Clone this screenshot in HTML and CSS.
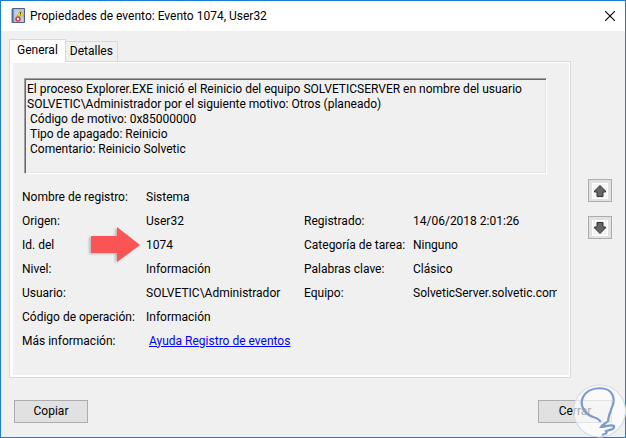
FILE: index.html
```html
<!DOCTYPE html>
<html lang="es">
<head>
<meta charset="utf-8">
<meta name="viewport" content="width=device-width, initial-scale=1">
<title>Propiedades de evento: Evento 1074, User32</title>
<link rel="stylesheet" href="styles.css">
</head>
<body>
<div class="dialog">
  <header class="titlebar">
    <svg class="app-icon" viewBox="0 0 16 16" width="16" height="16" aria-hidden="true">
      <path d="M2.500 .5h12v14h-12z" fill="#a9c0e0" stroke="#4a5f86"/>
      <path d="M5 3h8M5 5h8M5 7h8M5 9h8M5 11h8M5 13h8" stroke="#d5e3f4"/>
      <path d="M1 2h3M1 4h3M1 6h3M1 8h3M1 10h3M1 12h3M1 14h3" stroke="#66728a"/>
      <path d="M10.500 2 14 8H7z" fill="#ffdc2e" stroke="#c29a10" stroke-width=".6"/>
      <path d="M10.500 4v2M10.500 6.600v.8" stroke="#4b3c00"/>
      <circle cx="8" cy="11" r="2.800" fill="#d9483b"/>
      <path d="m7 10 2 2m0-2-2 2" stroke="#fff"/>
    </svg>
    <h1 class="title">Propiedades de evento: Evento 1074, User32</h1>
    <button class="close" type="button" aria-label="Cerrar ventana">
      <svg viewBox="0 0 10 10" width="10" height="10" aria-hidden="true"><path d="m0 0 10 10M10 0 0 10" stroke="#000" stroke-width="1.100"/></svg>
    </button>
  </header>

  <main class="content">
    <section class="tabs">
      <div class="tablist" role="tablist">
        <button class="tab tab-active" type="button" role="tab" aria-selected="true" aria-controls="general" id="tab-general">General</button>
        <button class="tab" type="button" role="tab" aria-selected="false">Detalles</button>
      </div>
      <div class="panel" role="tabpanel" id="general" aria-labelledby="tab-general">
        <div class="message">El proceso Explorer.EXE inició el Reinicio del equipo SOLVETICSERVER en nombre del usuario
SOLVETIC\Administrador por el siguiente motivo: Otros (planeado)
 Código de motivo: 0x85000000
 Tipo de apagado: Reinicio
 Comentario: Reinicio Solvetic</div>
        <dl class="details">
          <dt>Nombre de registro:</dt><dd class="wide">Sistema</dd>
          <dt>Origen:</dt><dd>User32</dd>
          <dt>Registrado:</dt><dd>14/06/2018 2:01:26</dd>
          <dt class="marked">Id. del
            <svg class="pointer" viewBox="0 0 52 38" width="52" height="38" aria-hidden="true"><path d="M2 10h26V1l23 18-23 17v-9H2z" fill="#fb5454"/></svg>
          </dt><dd>1074</dd>
          <dt>Categoría de tarea:</dt><dd>Ninguno</dd>
          <dt>Nivel:</dt><dd>Información</dd>
          <dt>Palabras clave:</dt><dd>Clásico</dd>
          <dt>Usuario:</dt><dd>SOLVETIC\Administrador</dd>
          <dt>Equipo:</dt><dd>SolveticServer.solvetic.com</dd>
          <dt>Código de operación:</dt><dd class="wide">Información</dd>
          <dt>Más información:</dt><dd class="wide link-cell"><a href="#ayuda">Ayuda Registro de eventos</a></dd>
        </dl>
      </div>
    </section>
    <nav class="stepper" aria-label="Eventos">
      <button class="step" type="button" aria-label="Evento anterior">
        <svg viewBox="0 0 16 16" width="16" height="16" aria-hidden="true"><path d="m8 2.500 5.500 5.500v1H11v4.500H5V9H2.500V8z" fill="#666" stroke="#333"/></svg>
      </button>
      <button class="step" type="button" aria-label="Evento siguiente">
        <svg viewBox="0 0 16 16" width="16" height="16" aria-hidden="true"><path d="m8 13.500 5.500-5.500V7H11V2.500H5V7H2.500v1z" fill="#666" stroke="#333"/></svg>
      </button>
    </nav>
  </main>

  <footer class="actions">
    <button class="button" type="button">Copiar</button>
    <button class="button" type="button">Cerrar</button>
  </footer>

  <svg class="watermark" viewBox="0 0 54 54" width="54" height="54" aria-hidden="true">
    <circle cx="27.500" cy="27" r="26" fill="#fff" fill-opacity=".65" stroke="#d5dbe8" stroke-width="1.200"/>
    <path d="M28.700 38C26 33 21 34 17 31 10 26 8 19 11 13c4-7 12-9.500 20-8.500 9 1 12 9 10 16-2 6-4 9-5 16" fill="none" stroke="#7c9cca" stroke-width="2.200"/>
    <path d="M37 36c-2 3-6 4-8 7 4 0 10-3 13-1 1 4-6 4-8 5 2 2-1 3-4 4" fill="none" stroke="#7c9cca" stroke-width="2.200"/>
  </svg>
</div>
</body>
</html>
```

FILE: styles.css
```css
* {
  box-sizing: border-box;
}

body {
  margin: 0;
  background: #f0f0f0;
  color: #000;
  font: 12px/15px Roboto, "Open Sans", sans-serif;
}

button {
  margin: 0;
  padding: 0;
  color: inherit;
  font: inherit;
}

svg {
  display: block;
}

.dialog {
  position: relative;
  display: flex;
  flex-direction: column;
  min-height: 100vh;
  border: 1px solid #1a7fd4;
}

.titlebar {
  display: flex;
  align-items: center;
  height: 30px;
  padding: 0 10px 0 9px;
  background: #fff;
}

.title {
  flex: 1;
  margin: 0 0 0 4px;
  font-size: 12px;
  font-weight: 400;
}

.close {
  border: 0;
  background: none;
}

.content {
  display: flex;
  padding: 8px 0 0 8px;
}

.tabs {
  flex: 1;
  min-width: 0;
}

.tablist {
  display: flex;
  align-items: flex-end;
}

.tab {
  height: 20px;
  padding: 0 4px;
  border: 1px solid #d9d9d9;
  border-width: 1px 1px 0 0;
  background: #f0f0f0;
}

.tab-active {
  position: relative;
  height: 23px;
  margin-bottom: -1px;
  padding: 0 7px 2px;
  border-width: 1px 1px 0;
  background: #fff;
}

.panel {
  padding: 16px 23px 24px 11px;
  border: 1px solid #d9d9d9;
  box-shadow: inset 3px 1px #fff, inset -1px -2px #fff;
}

.message {
  height: 96px;
  margin-left: 3px;
  padding: 3px 2px;
  border: 1px solid;
  border-color: #a0a0a0 #fff #fff #a0a0a0;
  box-shadow: inset 1px 1px #696969, inset -1px -1px #e3e3e3;
  white-space: pre-wrap;
}

.details {
  display: grid;
  grid-template-columns: 124px minmax(0, 1fr) 109px 144px;
  grid-auto-rows: 24px;
  align-items: center;
  margin: 11px -10px 0 1px;
}

.details dt,
.details dd {
  margin: 0;
  white-space: nowrap;
}

.details dd {
  overflow: hidden;
}

.details .wide {
  grid-column: span 3;
}

.details .link-cell {
  padding-left: 3px;
}

.details a {
  color: #00f;
}

.marked {
  position: relative;
}

.pointer {
  position: absolute;
  top: -12px;
  right: 5px;
  filter: drop-shadow(-2px 1px 1px #bbb);
}

.stepper {
  display: flex;
  flex-direction: column;
  align-items: center;
  gap: 14px;
  width: 54px;
  padding: 140px 0 0 4px;
}

.step {
  display: grid;
  place-items: center;
  width: 24px;
  height: 23px;
  border: 1px solid #adadad;
  background: #e1e1e1;
}

.step svg {
  background: #f4f4f4;
  outline: 1px solid #fff;
  outline-offset: -1px;
}

.actions {
  display: flex;
  justify-content: space-between;
  margin-top: auto;
  padding: 0 13px 14px;
}

.button {
  width: 74px;
  height: 23px;
  border: 1px solid #adadad;
  background: #e1e1e1;
}

.watermark {
  position: absolute;
  right: -1px;
  bottom: -1px;
}
```
